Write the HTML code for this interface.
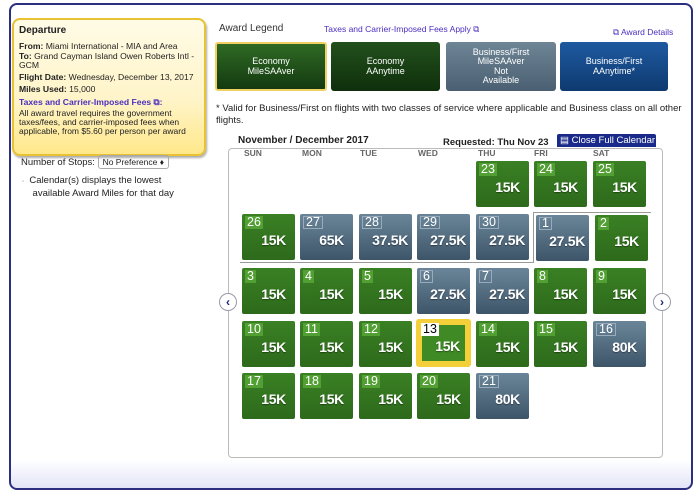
<!DOCTYPE html>
<html><head><style>
*{margin:0;padding:0;box-sizing:border-box}
body{width:700px;height:497px;background:#fff;font-family:"Liberation Sans",Arial,sans-serif;position:relative;overflow:hidden}
.a{position:absolute}
#panel{left:9px;top:3px;width:684px;height:487px;border:2px solid #2c2f80;border-radius:8px;background:linear-gradient(to bottom,#fff 0,#fff 455px,#dfe1f6 487px)}
#dep{left:12px;top:18px;width:194px;height:138px;border:2px solid #e8c232;border-radius:8px;background:linear-gradient(to bottom,#fffbe6 0,#fff4c8 60%,#ffe88a 100%);box-shadow:1px 2px 2px #aaa;padding:6px 5px;font-size:8.6px;color:#222;line-height:10.5px}
#dep b{font-weight:bold}
.lg{top:42px;height:49px;border-radius:3px;color:#fff;font-size:9px;text-align:center;display:flex;align-items:center;justify-content:center;line-height:9.5px}
.c{position:absolute;width:53px;height:46px;border-radius:2px;color:#fff;font-weight:bold;font-size:13px}
.g{background:linear-gradient(to bottom,#3a8024,#2d6a1b)}
.s{background:linear-gradient(to bottom,#6a8599,#3e5569)}
.c .n{position:absolute;left:3px;top:2px;font-size:12.5px;font-weight:normal;padding:0 2px;line-height:13px}
.g .n{background:#52a034}
.s .n{border:1px solid #9ab;line-height:11px}
.c .v{position:absolute;right:9px;top:18px;font-size:14px;letter-spacing:-0.3px;text-shadow:0 1px 1px rgba(0,0,0,.4)}
.arr{width:18px;height:18px;border:1px solid #99a;border-radius:50%;background:#fff;color:#1a237e;font-weight:bold;font-size:12px;text-align:center;line-height:16px}
</style></head><body>
<div id="panel" class="a"></div>
<div id="dep" class="a">
<div style="font-weight:bold;font-size:10px;margin-bottom:4px">Departure</div>
<div><b>From:</b> Miami International - MIA and Area</div>
<div style="margin-top:1px;line-height:9px"><b>To:</b> Grand Cayman Island Owen Roberts Intl - GCM</div>
<div style="margin-top:2px;white-space:nowrap"><b>Flight Date:</b> Wednesday, December 13, 2017</div>
<div style="margin-top:1px"><b>Miles Used:</b> 15,000</div>
<div style="margin-top:3px;color:#4b2fbf;font-weight:bold">Taxes and Carrier-Imposed Fees ⧉:</div>
<div style="line-height:9px;margin-top:1px;font-size:8.5px">All award travel requires the government taxes/fees, and carrier-imposed fees when applicable, from $5.60 per person per award</div>
</div>
<div class="a" style="left:21px;top:157px;font-size:9.5px;color:#222">Number of Stops: <span style="border:1px solid #aaa;border-radius:3px;padding:1px 4px;font-size:8.5px">No Preference ♦</span></div>
<div class="a" style="left:22px;top:175px;font-size:9.5px;color:#222;line-height:11px"><span style="font-size:6px;color:#999">▫</span>&nbsp; Calendar(s) displays the lowest<br>&nbsp;&nbsp;&nbsp;&nbsp;available Award Miles for that day</div>

<div class="a" style="left:219px;top:23px;font-size:10px;color:#333">Award Legend</div>
<div class="a" style="left:324px;top:24px;font-size:8.5px;color:#4b2fbf">Taxes and Carrier-Imposed Fees Apply ⧉</div>
<div class="a" style="left:613px;top:27px;font-size:8.5px;color:#4b2fbf">⧉ Award Details</div>
<div class="a lg" style="left:215px;width:112px;background:linear-gradient(#2f6a24,#143a10);border:2px solid #f0d060">Economy<br>MileSAAver</div>
<div class="a lg" style="left:331px;width:109px;background:linear-gradient(#22501c,#0f2f0c)">Economy<br>AAnytime</div>
<div class="a lg" style="left:446px;width:110px;background:linear-gradient(#6e8596,#4a6072)">Business/First<br>MileSAAver<br>Not<br>Available</div>
<div class="a lg" style="left:560px;width:108px;background:linear-gradient(#1e5aa0,#0e3a70)">Business/First<br>AAnytime*</div>
<div class="a" style="left:216px;top:103px;width:472px;font-size:9.5px;color:#222;line-height:12px">* Valid for Business/First on flights with two classes of service where applicable and Business class on all other flights.</div>
<div class="a" style="left:238px;top:135px;font-size:10px;font-weight:bold;color:#222">November / December 2017</div>
<div class="a" style="left:443px;top:137px;font-size:9.5px;font-weight:bold;color:#222">Requested: Thu Nov 23</div>
<div class="a" style="left:557px;top:134px;width:99px;height:13px;background:#1a2a8a;color:#fff;font-size:9.5px;line-height:13px;padding-left:3px;border-radius:2px 2px 0 0">▤ Close Full Calendar</div>
<div class="a" style="left:228px;top:148px;width:435px;height:310px;border:1px solid #bbb;border-radius:4px"></div>
<div class="a" style="left:242px;top:148px;width:420px;font-size:8.5px;color:#666;font-weight:bold">
<span class="a" style="left:2px">SUN</span><span class="a" style="left:60px">MON</span><span class="a" style="left:118px">TUE</span><span class="a" style="left:176px">WED</span><span class="a" style="left:236px">THU</span><span class="a" style="left:292px">FRI</span><span class="a" style="left:351px">SAT</span></div>
<div class="a" style="left:240px;top:262px;width:294px;height:1px;background:#999"></div>
<div class="a" style="left:533px;top:212px;width:1px;height:51px;background:#999"></div>
<div class="a" style="left:533px;top:212px;width:118px;height:1px;background:#999"></div>

<div class="c g" style="left:476px;top:161px"><span class="n">23</span><span class="v">15K</span></div>
<div class="c g" style="left:534px;top:161px"><span class="n">24</span><span class="v">15K</span></div>
<div class="c g" style="left:593px;top:161px"><span class="n">25</span><span class="v">15K</span></div>

<div class="c g" style="left:242px;top:214px"><span class="n">26</span><span class="v">15K</span></div>
<div class="c s" style="left:300px;top:214px"><span class="n">27</span><span class="v">65K</span></div>
<div class="c s" style="left:359px;top:214px"><span class="n">28</span><span class="v" style="right:4px">37.5K</span></div>
<div class="c s" style="left:417px;top:214px"><span class="n">29</span><span class="v" style="right:4px">27.5K</span></div>
<div class="c s" style="left:476px;top:214px"><span class="n">30</span><span class="v" style="right:4px">27.5K</span></div>
<div class="c s" style="left:536px;top:215px"><span class="n">1</span><span class="v" style="right:4px">27.5K</span></div>
<div class="c g" style="left:595px;top:215px"><span class="n">2</span><span class="v">15K</span></div>

<div class="c g" style="left:242px;top:268px"><span class="n">3</span><span class="v">15K</span></div>
<div class="c g" style="left:300px;top:268px"><span class="n">4</span><span class="v">15K</span></div>
<div class="c g" style="left:359px;top:268px"><span class="n">5</span><span class="v">15K</span></div>
<div class="c s" style="left:417px;top:268px"><span class="n">6</span><span class="v" style="right:4px">27.5K</span></div>
<div class="c s" style="left:476px;top:268px"><span class="n">7</span><span class="v" style="right:4px">27.5K</span></div>
<div class="c g" style="left:534px;top:268px"><span class="n">8</span><span class="v">15K</span></div>
<div class="c g" style="left:593px;top:268px"><span class="n">9</span><span class="v">15K</span></div>

<div class="c g" style="left:242px;top:321px"><span class="n">10</span><span class="v">15K</span></div>
<div class="c g" style="left:300px;top:321px"><span class="n">11</span><span class="v">15K</span></div>
<div class="c g" style="left:359px;top:321px"><span class="n">12</span><span class="v">15K</span></div>
<div class="c" style="left:416px;top:319px;width:55px;height:48px;background:#f3cf3a;border-radius:3px"><div style="position:absolute;left:6px;top:6px;width:43px;height:36px;background:#3f8a25"></div><span class="n" style="background:#fff;color:#000;left:5px;top:4px">13</span><span class="v" style="right:11px;top:19px">15K</span></div>
<div class="c g" style="left:476px;top:321px"><span class="n">14</span><span class="v">15K</span></div>
<div class="c g" style="left:534px;top:321px"><span class="n">15</span><span class="v">15K</span></div>
<div class="c s" style="left:593px;top:321px"><span class="n">16</span><span class="v">80K</span></div>

<div class="c g" style="left:242px;top:373px"><span class="n">17</span><span class="v">15K</span></div>
<div class="c g" style="left:300px;top:373px"><span class="n">18</span><span class="v">15K</span></div>
<div class="c g" style="left:359px;top:373px"><span class="n">19</span><span class="v">15K</span></div>
<div class="c g" style="left:417px;top:373px"><span class="n">20</span><span class="v">15K</span></div>
<div class="c s" style="left:476px;top:373px"><span class="n">21</span><span class="v">80K</span></div>

<div class="a arr" style="left:219px;top:293px">‹</div>
<div class="a arr" style="left:653px;top:293px">›</div>
</body></html>
